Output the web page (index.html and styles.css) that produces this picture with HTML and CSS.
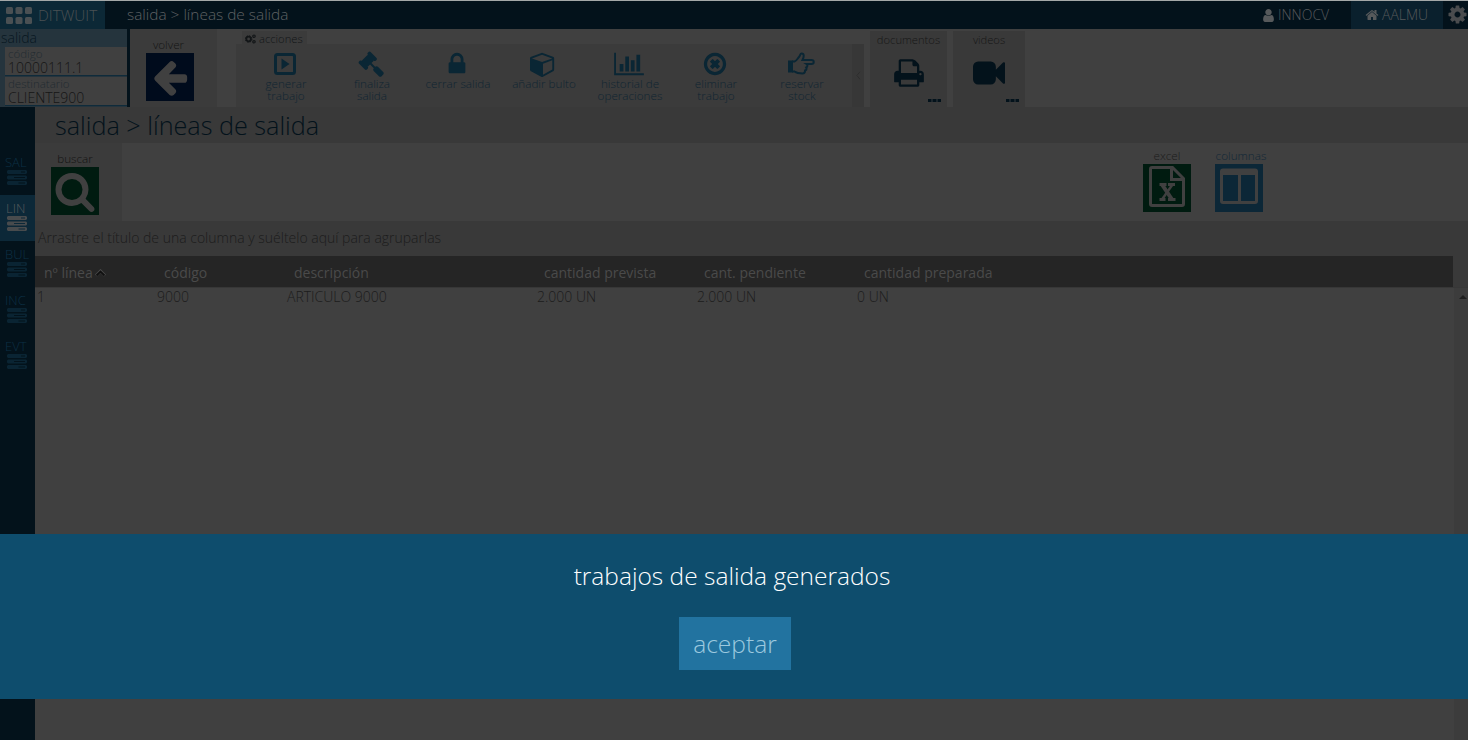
FILE: index.html
```html
<!DOCTYPE html>
<html lang="es">
<head>
<meta charset="utf-8">
<title>salida &gt; líneas de salida</title>
<link rel="stylesheet" href="styles.css">
</head>
<body>
<svg class="defs" width="0" height="0">
  <symbol id="server" viewBox="0 0 20 15"><path fill-rule="evenodd" d="M1 0h18l1 1v2l-1 1H1L0 3V1zM14 1.500v1h4v-1zM1 5.500h18l1 1v2l-1 1H1l-1-1v-2zM7 7v1h11V7zM1 11h18l1 1v2l-1 1H1l-1-1v-2zM11.500 12.500v1H18v-1z"/></symbol>
</svg>
<header class="topbar">
  <div class="brand"><svg width="26" height="17" viewBox="0 0 26 17"><g><rect width="7" height="7" rx="1.500"/><rect x="9.500" width="7" height="7" rx="1.500"/><rect x="19" width="7" height="7" rx="1.500"/><rect y="10" width="7" height="7" rx="1.500"/><rect x="9.500" y="10" width="7" height="7" rx="1.500"/><rect x="19" y="10" width="7" height="7" rx="1.500"/></g></svg><span>DITWUIT</span></div>
  <div class="crumb">salida &gt; líneas de salida</div>
  <div class="user"><svg width="15" height="15" viewBox="0 0 1792 1792"><path d="M1536 1399q0 109-62.500 187t-150.500 78h-854q-88 0-150.500-78t-62.500-187q0-85 8.500-160.500t31.500-152 58.500-131 94-89 134.500-34.500q131 128 313 128t313-128q76 0 134.500 34.500t94 89 58.500 131 31.500 152 8.500 160.500zm-256-887q0 159-112.500 271.500t-271.500 112.500-271.500-112.500-112.500-271.500 112.500-271.500 271.500-112.500 271.500 112.500 112.500 271.500z"/></svg><span>INNOCV</span></div>
  <div class="site"><svg width="14" height="14" viewBox="0 0 1792 1792"><path d="M1472 992v480q0 26-19 45t-45 19h-384v-384h-256v384h-384q-26 0-45-19t-19-45v-480q0-1 .5-3t.5-3l575-474 575 474q1 2 1 6zm223-69l-62 74q-8 9-21 11h-3q-13 0-21-7l-692-577-692 577q-12 8-24 7-13-2-21-11l-62-74q-8-10-7-23.500t11-21.500l719-599q32-26 76-26t76 26l244 204v-195q0-14 9-23t23-9h192q14 0 23 9t9 23v408l219 182q10 8 11 21.500t-7 23.500z"/></svg><span>AALMU</span></div>
  <div class="config"><svg width="21" height="21" viewBox="0 0 1792 1792"><path d="M1152 896q0-106-75-181t-181-75-181 75-75 181 75 181 181 75 181-75 75-181zm512-109v222q0 12-8 23t-20 13l-185 28q-19 54-39 91 35 50 107 138 10 12 10 25t-9 23q-27 37-99 108t-94 71q-12 0-26-9l-138-108q-44 23-91 38-16 136-29 186-7 28-36 28h-222q-14 0-24.500-8.500t-11.500-21.500l-28-184q-49-16-90-37l-141 107q-10 9-25 9-14 0-25-11-126-114-165-168-7-10-7-23 0-12 8-23 15-21 51-66.500t54-70.500q-27-50-41-99l-183-27q-13-2-21-12.500t-8-23.500v-222q0-12 8-23t19-13l186-28q14-46 39-92-40-57-107-138-10-12-10-24 0-10 9-23 26-36 98.500-107.500t94.500-71.500q13 0 26 10l138 107q44-23 91-38 16-136 29-186 7-28 36-28h222q14 0 24.500 8.500t11.500 21.500l28 184q49 16 90 37l142-107q9-9 24-9 13 0 25 10 129 119 165 170 7 8 7 22 0 12-8 23-15 21-51 66.500t-54 70.500q26 50 41 98l183 28q13 2 21 12.500t8 23.500z"/></svg></div>
</header>

<section class="ribbon">
  <div class="info">
    <div class="info-title">salida</div>
    <div class="field"><label>código</label><b>10000111.1</b></div>
    <div class="field"><label>destinatario</label><b>CLIENTE900</b></div>
  </div>
  <div class="back"><span>volver</span>
    <div class="tile navy"><svg width="40" height="40" viewBox="0 0 1792 1792"><path d="M1664 896v128q0 53-32.500 90.500t-84.500 37.500h-704l293 294q38 36 38 90t-38 90l-75 76q-37 37-90 37-52 0-91-37l-651-652q-37-37-37-90 0-52 37-91l651-650q38-38 91-38 52 0 90 38l75 74q38 38 38 91t-38 91l-293 293h704q52 0 84.500 37.500t32.500 90.500z"/></svg></div>
  </div>
  <div class="actions">
    <div class="tab"><svg width="11" height="10" viewBox="0 0 11 10" fill="none" stroke="currentColor"><circle cx="3.600" cy="5" r="2.300" stroke-width="1.800"/><circle cx="3.600" cy="5" r="3.300" stroke-dasharray="1.300 1.300"/><circle cx="9" cy="2.200" r="1.200" stroke-width="1.200"/><circle cx="9" cy="7.800" r="1.200" stroke-width="1.200"/></svg><span>acciones</span></div>
    <div class="strip">
      <div class="action"><svg width="26" height="26" viewBox="0 0 26 26"><rect x="3.500" y="3.500" width="19" height="19" rx="2" fill="none" stroke="currentColor" stroke-width="3"/><path d="M9.500 7.500v11l8-5.500z"/></svg><span>generar<br>trabajo</span></div>
      <div class="action"><svg width="26" height="26" viewBox="0 0 1792 1792"><path d="M1771 1536q0 53-37 90l-107 108q-39 37-91 37-53 0-90-37l-363-364q-38-36-38-90 0-53 43-96l-256-256-126 126q-14 14-34 14t-34-14q2 2 12.500 12t12.500 13 10 11.500 10 13.500 6 13.500 5.500 16.500 1.500 18q0 38-28 68-3 3-16.500 18t-19 20.500-18.500 16.500-22 15.500-22 9-26 4.500q-40 0-68-28l-408-408q-28-28-28-68 0-13 4.500-26t9-22 15.500-22 16.500-18.500 20.500-19 18-16.500q30-28 68-28 10 0 18 1.500t16.500 5.500 13.500 6 13.500 10 11.500 10 13 12.500 12 12.500q-14-14-14-34t14-34l348-348q14-14 34-14t34 14q-2-2-12.500-12t-12.500-13-10-11.500-10-13.500-6-13.500-5.500-16.500-1.500-18q0-38 28-68 3-3 16.500-18t19-20.500 18.500-16.500 22-15.500 22-9 26-4.500q40 0 68 28l408 408q28 28 28 68 0 13-4.500 26t-9 22-15.500 22-16.500 18.500-20.500 19-18 16.500q-30 28-68 28-10 0-18-1.500t-16.500-5.500-13.500-6-13.500-10-11.500-10-13-12.500-12-12.500q14 14 14 34t-14 34l-126 126 256 256q43-43 96-43 52 0 91 37l363 363q37 39 37 91z"/></svg><span>finaliza<br>salida</span></div>
      <div class="action"><svg width="26" height="26" viewBox="0 0 1792 1792"><path d="M640 768h512v-192q0-106-75-181t-181-75-181 75-75 181v192zm832 96v576q0 40-28 68t-68 28h-960q-40 0-68-28t-28-68v-576q0-40 28-68t68-28h32v-192q0-184 132-316t316-132 316 132 132 316v192h32q40 0 68 28t28 68z"/></svg><span>cerrar salida</span></div>
      <div class="action"><svg width="26" height="26" viewBox="0 0 1792 1792"><path d="M896 1629l640-349v-636l-640 233v752zm-64-865l698-254-698-254-698 254zm832-252v768q0 35-18 65t-49 47l-704 384q-28 16-61 16t-61-16l-704-384q-31-17-49-47t-18-65v-768q0-40 23-73t61-47l704-256q22-8 44-8t44 8l704 256q38 14 61 47t23 73z"/></svg><span>añadir bulto</span></div>
      <div class="action"><svg width="30" height="26" viewBox="0 0 2048 1792"><path d="M640 896v512h-256v-512h256zm384-512v1024h-256v-1024h256zm1024 1152v128h-2048v-1536h128v1408h1920zm-640-896v768h-256v-768h256zm384-384v1152h-256v-1152h256z"/></svg><span>historial de<br>operaciones</span></div>
      <div class="action"><svg width="26" height="26" viewBox="0 0 1792 1792"><path d="M1225 1079l-146 146q-10 10-23 10t-23-10l-137-137-137 137q-10 10-23 10t-23-10l-146-146q-10-10-10-23t10-23l137-137-137-137q-10-10-10-23t10-23l146-146q10-10 23-10t23 10l137 137 137-137q10-10 23-10t23 10l146 146q10 10 10 23t-10 23l-137 137 137 137q10 10 10 23t-10 23zm215-183q0-148-73-273t-198-198-273-73-273 73-198 198-73 273 73 273 198 198 273 73 273-73 198-198 73-273zm224 0q0 209-103 385.500t-279.500 279.500-385.500 103-385.500-103-279.500-279.500-103-385.500 103-385.500 279.500-279.500 385.500-103 385.500 103 279.500 279.500 103 385.500z"/></svg><span>eliminar<br>trabajo</span></div>
      <div class="action"><svg width="28" height="26" viewBox="0 0 28 26"><path d="M1 9.500h5v12H1z"/><path d="M5 10.500h2.500c2-.5 3-3 4.500-4.500 1.300-1.300 1-3.500 2.700-3.500 2.800 0 2.300 3.500.8 6.500h9c3 0 3 4 0 4h-5c1.500 1 1 3-.3 3.500.8 1.500 0 2.800-1.200 3 .2 2-1 3-2.500 3-4 0-6-.5-8-2H5" fill="none" stroke="currentColor" stroke-width="2"/></svg><span>reservar<br>stock</span></div>
      <div class="more"><svg width="5" height="9" viewBox="0 0 5 9"><path d="M4 .8L.8 4.500 4 8.200" fill="none" stroke="currentColor"/></svg></div>
    </div>
  </div>
  <div class="box docs"><span>documentos</span><svg width="32" height="32" viewBox="0 0 1792 1792"><path d="M448 1536h896v-256h-896v256zm0-640h896v-384h-160q-40 0-68-28t-28-68v-160h-640v640zm1152 64q0-26-19-45t-45-19-45 19-19 45 19 45 45 19 45-19 19-45zm128 0v416q0 13-9.500 22.500t-22.500 9.500h-224v160q0 40-28 68t-68 28h-960q-40 0-68-28t-28-68v-160h-224q-13 0-22.500-9.500t-9.500-22.500v-416q0-79 56.500-135.500t135.500-56.500h64v-544q0-40 28-68t68-28h672q40 0 88 20t76 48l152 152q28 28 48 76t20 88v256h64q79 0 135.500 56.500t56.500 135.500z"/></svg><i class="dots"></i></div>
  <div class="box vids"><span>videos</span><svg width="32" height="32" viewBox="0 0 1792 1792"><path d="M1792 352v1088q0 42-39 59-13 5-25 5-27 0-45-19l-403-403v166q0 119-84.500 203.500t-203.500 84.500h-704q-119 0-203.500-84.500t-84.500-203.500v-704q0-119 84.500-203.500t203.500-84.500h704q119 0 203.500 84.500t84.500 203.500v165l403-402q18-19 45-19 12 0 25 5 39 17 39 59z"/></svg><i class="dots"></i></div>
</section>

<div class="body">
  <nav class="side">
    <a><span>SAL</span><svg width="20" height="15"><use href="#server"/></svg></a>
    <a class="active"><span>LIN</span><svg width="20" height="15"><use href="#server"/></svg></a>
    <a><span>BUL</span><svg width="20" height="15"><use href="#server"/></svg></a>
    <a><span>INC</span><svg width="20" height="15"><use href="#server"/></svg></a>
    <a><span>EVT</span><svg width="20" height="15"><use href="#server"/></svg></a>
  </nav>
  <main>
    <h1>salida &gt; líneas de salida</h1>
    <div class="tools">
      <div class="search"><span>buscar</span><div class="tile green"><svg width="42" height="42" viewBox="0 0 1792 1792"><path d="M1216 832q0-185-131.500-316.500t-316.500-131.500-316.500 131.500-131.500 316.500 131.500 316.500 316.500 131.500 316.500-131.500 131.500-316.500zm512 832q0 52-38 90t-90 38q-54 0-90-38l-343-342q-179 124-399 124-143 0-273.500-55.500t-225-150-150-225-55.500-273.500 55.500-273.500 150-225 225-150 273.500-55.500 273.500 55.500 225 150 150 225 55.500 273.500q0 220-124 399l343 343q37 37 37 90z"/></svg></div></div>
      <div class="tool"><span>excel</span><div class="tile green"><svg width="48" height="48" viewBox="0 0 48 48"><g fill="none" stroke="currentColor" stroke-width="3"><path d="M9 3.500h20.500l11 11V40q0 1.500-1.500 1.500H9Q7.500 41.500 7.500 40V5Q7.500 3.500 9 3.500z"/><path d="M28.500 4v11.500h12"/><path d="M19 20.500l10 15" stroke-width="4"/><path d="M29.500 20.500l-10.500 15" stroke-width="2.500"/><path d="M16.500 20.500h7M25 20.500h7M16.500 35.500h6M25 35.500h7.500"/></g></svg></div></div>
      <div class="tool cols"><span>columnas</span><div class="tile blue"><svg width="48" height="48" viewBox="0 0 48 48"><path fill-rule="evenodd" d="M8 4.500h32q3 0 3 3V37q0 3-3 3H8q-3 0-3-3V7.500q0-3 3-3zM8 11v26h15V11zM26 11v26h14V11z"/></svg></div></div>
    </div>
    <div class="group">Arrastre el título de una columna y suéltelo aquí para agruparlas</div>
    <div class="grid-head">
      <div class="c1">nº línea<svg width="11" height="8" viewBox="0 0 11 8"><path d="M1 6.500l4.500-4.500L10 6.500" fill="none" stroke="#4a4a4a" stroke-width="3"/><path d="M1.500 6.500l4-4 4 4" fill="none" stroke="currentColor" stroke-width="1.800"/></svg></div><div class="c2">código</div><div class="c3">descripción</div><div class="c4">cantidad prevista</div><div class="c5">cant. pendiente</div><div>cantidad preparada</div>
    </div>
    <div class="grid-body">
      <div class="row"><div class="c1">1</div><div class="c2">9000</div><div class="c3">ARTICULO 9000</div><div class="c4">2.000 UN</div><div class="c5">2.000 UN</div><div>0 UN</div></div>
      <div class="scroll"><svg width="8" height="4" viewBox="0 0 8 4"><path d="M0 4l4-4 4 4z"/></svg></div>
    </div>
  </main>
</div>

<div class="message" role="alertdialog">
  <p>trabajos de salida generados</p>
  <button>aceptar</button>
</div>
</body>
</html>
```
FILE: styles.css
```css
* { box-sizing: border-box; }
body { margin: 0; width: 1468px; height: 740px; overflow: hidden; background: #404040; font-family: "Open Sans", sans-serif; font-weight: 300; color: #1c1c1c; display: flex; flex-direction: column; position: relative; white-space: nowrap; }
svg { display: block; fill: currentColor; flex: none; }
.defs { position: absolute; }

.topbar { display: flex; height: 29px; border-top: 1px solid #a4a8a8; background: #03121b; color: #5e6163; font-size: 14px; flex: none; }
.topbar > div { display: flex; align-items: center; }
.topbar span { margin-top: -1px; }
.brand { width: 105px; padding-left: 6px; gap: 6px; background: #0c2836; color: #4a5053; font-size: 15.3px; }
.brand span { font-size: 15.3px; }
.crumb { flex: 1; padding: 0 0 2px 22px; font-size: 15.4px; }
.user { width: 90px; gap: 2px; margin-left: -1px; color: #56595b; }
.site { width: 92px; background: #0a202d; padding-left: 14px; gap: 3px; color: #56595b; }
.config { width: 25px; padding-left: 4px; color: #4a4c4e; }
.config svg { margin-top: -1px; }

.ribbon { display: flex; height: 78px; flex: none; font-size: 11.7px; }
.info { width: 130px; background: #25343d; border-right: 3px solid #03121b; padding-left: 5px; }
.info-title { height: 18px; line-height: 17px; font-size: 14px; color: #07161f; margin-left: -4px; }
.field { height: 29px; background: #404040; border-bottom: 1px solid #0f2b3b; padding-left: 3px; margin-bottom: 1px; }
.field label { display: block; height: 13px; line-height: 14px; color: #222b31; font-size: 11.5px; }
.field b { display: block; line-height: 16px; font-size: 14px; font-weight: 300; color: #151515; }
.back { width: 87px; background: #3b3b3b; padding: 8px 0 0 16px; color: #151515; }
.back span { display: block; height: 16px; line-height: 14px; width: 45px; text-align: center; }
.tile { width: 48px; height: 48px; display: flex; align-items: center; justify-content: center; color: #404040; }
.navy { background: #000b1c; }
.green { background: #001b10; }
.green svg { margin-top: -1px; }
.tool .green svg { margin-top: 0; }
.blue { background: #0c2737; }
.actions { margin: 2px 0 0 19px; width: 628px; }
.tab { display: flex; align-items: center; gap: 3px; width: 65px; height: 13px; margin-left: 6px; padding: 3px 0 0 3px; background: #3b3b3b; color: #121517; font-size: 11.2px; }
.tab svg { fill: none; }
.tab span { margin-top: -2px; }
.strip { display: flex; height: 63px; background: #3b3b3b; padding-left: 7px; }
.action { width: 86px; padding-top: 7px; display: flex; flex-direction: column; align-items: center; color: #0a2634; line-height: 12px; text-align: center; }
.action svg { margin: 0 3px 0 0; }
.action span { color: #102532; }
.more { width: 12px; margin-left: auto; background: #373737; color: #2e2e2e; display: flex; align-items: center; justify-content: center; }
.box { position: relative; background: #393939; margin: 2px 0 0 6px; color: #03121b; display: flex; flex-direction: column; align-items: center; }
.box span { color: #171717; line-height: 17px; height: 26px; font-size: 11.2px; }
.docs { width: 77px; }
.vids { width: 72px; }
.dots { position: absolute; right: 6px; bottom: 5px; width: 13px; height: 3px; background: repeating-linear-gradient(90deg, #03121b 0 3px, #1c262c 3px 5px); }

.body { display: flex; flex: 1; min-height: 0; }
.side { width: 35px; background: #03121b; padding-top: 42px; }
.side a { display: flex; flex-direction: column; height: 46px; padding: 5px 0 0 5px; color: #0a2433; font-size: 13px; }
.side span { line-height: 16px; color: #0c3044; }
.side svg { margin-left: 2px; }
.side .active { background: #0c2838; color: #484b4d; }
.side .active span { color: #585b5d; margin-left: 1px; }
main { flex: 1; display: flex; flex-direction: column; }
h1 { margin: 0; height: 36px; line-height: 37px; padding-left: 20px; background: #393939; color: #03121b; font-size: 25.2px; font-weight: 300; }
.tools { display: flex; height: 78px; font-size: 11.7px; }
.search { width: 87px; background: #3b3b3b; padding: 8px 0 0 16px; margin-right: 1021px; color: #121212; }
.search span, .tool span { display: block; height: 16px; line-height: 14px; width: 48px; text-align: center; }
.tool { width: 72px; padding-top: 5px; }
.tool.cols span { width: 52px; color: #102736; }
.group { height: 35px; line-height: 34px; padding-left: 3px; background: #393939; font-size: 14px; }
.grid-head { display: flex; height: 31px; width: 1418px; background: #252525; color: #4a4a4a; font-size: 14px; font-weight: 400; line-height: 33px; padding-left: 9px; box-shadow: 15px 0 #393939; }
.grid-head .c1 { display: flex; gap: 2px; }
.grid-head .c1 svg { color: #101010; margin-top: 13px; }
.c1 { width: 120px; }
.c2 { width: 130px; }
.c3 { width: 250px; }
.c4, .c5 { width: 160px; }
.grid-body { display: flex; flex: 1; border-top: 1px solid #373737; justify-content: space-between; font-size: 14px; }
.row { display: flex; padding-left: 2px; line-height: 18px; }
.scroll { width: 14px; background: #3c3c3c; color: #1e1e1e; padding: 7px 0 0 5px; }

.message { position: absolute; left: 0; right: 0; top: 534px; height: 165px; background: #0e4d6d; text-align: center; padding-left: 2px; }
.message p { margin: 25px 6px 23px 0; line-height: 34px; height: 35px; font-size: 24.5px; color: #fff; }
.message button { display: block; margin: 0 auto; width: 112px; height: 53px; border: 0; padding: 0; background: #2273a0; color: #9cc9df; font: 300 24.6px "Open Sans", sans-serif; }
```
